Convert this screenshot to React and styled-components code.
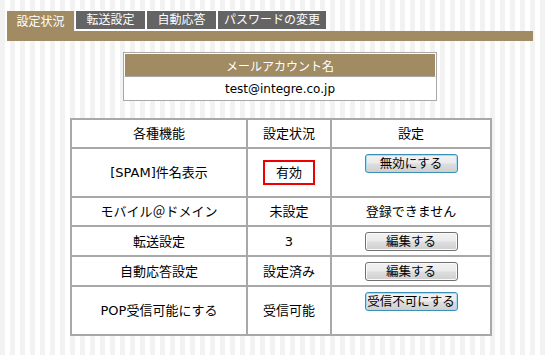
import React from 'react'
import styled, { createGlobalStyle } from 'styled-components'

const GlobalStyle = createGlobalStyle`
    body {
        margin: 0;
        background: repeating-linear-gradient(to right, #f2f2f2 0, #f2f2f2 5px, #ffffff 5px, #ffffff 10px);
        font-family: "DejaVu Sans", "Noto Sans CJK JP", sans-serif;
        font-size: 12px;
        color: #000;
    }
`

const brown = '#a08b63'

const Page = styled.div`
    width: 560px;
    padding-top: 10px;
    padding-bottom: 20px;
`

const TabRow = styled.div`
    display: flex;
    padding-left: 7px;
`

const Tab = styled.div`
    box-sizing: border-box;
    height: 21px;
    width: ${p => p.width}px;
    display: flex;
    align-items: center;
    justify-content: center;
    color: #fff;
    font-size: 12px;
    line-height: 14px;
    background: ${p => (p.active ? brown : '#646464')};
    background-clip: padding-box;
    border: 1px solid ${p => (p.active ? 'transparent' : '#fff')};
    border-bottom: ${p => (p.active ? '0' : '2px solid #fff')};
    border-left-width: ${p => (p.active ? '0' : '1px')};
    padding-top: ${p => (p.active ? '1px' : '0')};
`

const Bar = styled.div`
    margin-left: 7px;
    width: 526px;
    height: 10px;
    background: ${brown};
`

const AccountTable = styled.table`
    margin: 11px 0 0 123px;
    width: 314px;
    border-collapse: separate;
    border-spacing: 0;
    border: 1px solid #a8a8a8;
    background: #fff;
`

const AccountHead = styled.th`
    height: 22px;
    padding: 0;
    background: ${brown};
    color: #fff;
    font-size: 12px;
    font-weight: normal;
    border: 1px solid #fff;
    border-bottom: 1px solid #a8a8a8;
`

const AccountCell = styled.td`
    height: 22px;
    padding: 0;
    text-align: center;
    border-top: 1px solid #fff;
`

const MainTable = styled.table`
    margin: 17px 0 0 70px;
    width: 420px;
    border-collapse: separate;
    border-spacing: 0;
    border: 1px solid #a8a8a8;
    background: #fff;
    table-layout: fixed;
    font-size: 13px;
`

const Cell = styled.td`
    box-sizing: border-box;
    height: ${p => p.h}px;
    padding: ${p => (p.top ? '5px 0 0' : '0')};
    text-align: center;
    vertical-align: ${p => (p.top ? 'top' : 'middle')};
    border: 1px solid #a8a8a8;
    line-height: 15px;
    white-space: nowrap;
`

const HeadCell = styled(Cell).attrs({ as: 'th' })`
    font-weight: normal;
`

const StatusBox = styled.span`
    display: inline-block;
    border: 2px solid #ee0000;
    padding: 3px 11px;
    line-height: 15px;
`

const ActionButton = styled.button`
    box-sizing: border-box;
    width: 93px;
    height: 19px;
    padding: 0;
    font-family: "DejaVu Sans", "Noto Sans CJK JP", sans-serif;
    font-size: 12.5px;
    line-height: 15px;
    white-space: nowrap;
    color: #000;
    border: 1px solid ${p => (p.focused ? '#3c8fb5' : '#707070')};
    border-radius: 3px;
    background: linear-gradient(to bottom, #f2f2f2 0%, #ebebeb 45%, #dddddd 55%, #cfcfcf 100%);
    box-shadow: inset 0 0 0 1px ${p => (p.focused ? '#a8dcf2' : '#fbfbfb')};
    cursor: pointer;
`

const rows = [
    { name: '[SPAM]件名表示', status: <StatusBox>有効</StatusBox>, action: <ActionButton focused>無効にする</ActionButton>, h: 49, top: true },
    { name: 'モバイル＠ドメイン', status: '未設定', action: '登録できません', h: 29 },
    { name: '転送設定', status: '3', action: <ActionButton>編集する</ActionButton>, h: 30 },
    { name: '自動応答設定', status: '設定済み', action: <ActionButton>編集する</ActionButton>, h: 30 },
    { name: 'POP受信可能にする', status: '受信可能', action: <ActionButton focused>受信不可にする</ActionButton>, h: 49, top: true },
]

export default function App() {
    return (
        <Page>
            <GlobalStyle />
            <TabRow>
                <Tab active width={68}>設定状況</Tab>
                <Tab width={71}>転送設定</Tab>
                <Tab width={71}>自動応答</Tab>
                <Tab width={110}>パスワードの変更</Tab>
            </TabRow>
            <Bar />
            <AccountTable>
                <tbody>
                    <tr><AccountHead>メールアカウント名</AccountHead></tr>
                    <tr><AccountCell>test@integre.co.jp</AccountCell></tr>
                </tbody>
            </AccountTable>
            <MainTable>
                <colgroup>
                    <col style={{ width: 176 }} />
                    <col style={{ width: 84 }} />
                    <col style={{ width: 160 }} />
                </colgroup>
                <tbody>
                    <tr>
                        <HeadCell h={29}>各種機能</HeadCell>
                        <HeadCell h={29}>設定状況</HeadCell>
                        <HeadCell h={29}>設定</HeadCell>
                    </tr>
                    {rows.map(row => (
                        <tr key={row.name}>
                            <Cell h={row.h}>{row.name}</Cell>
                            <Cell h={row.h}>{row.status}</Cell>
                            <Cell h={row.h} top={row.top}>{row.action}</Cell>
                        </tr>
                    ))}
                </tbody>
            </MainTable>
        </Page>
    )
}
